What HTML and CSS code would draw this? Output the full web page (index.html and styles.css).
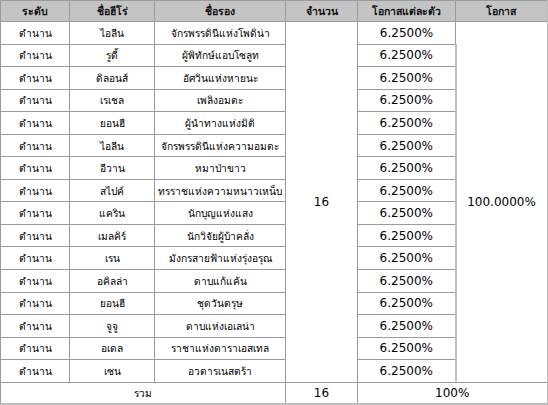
FILE: index.html
```html
<!DOCTYPE html>
<html lang="th">
<head>
<meta charset="utf-8">
<link rel="stylesheet" href="styles.css">
</head>
<body>
<table class="grid">
  <colgroup>
    <col class="c1"><col class="c2"><col class="c3"><col class="c4"><col class="c5"><col class="c6">
  </colgroup>
  <thead>
    <tr class="head">
      <th>ระดับ</th><th>ชื่อฮีโร่</th><th>ชื่อรอง</th><th>จำนวน</th><th>โอกาสแต่ละตัว</th><th>โอกาส</th>
    </tr>
  </thead>
  <tbody>
    <tr><td class="th">ตำนาน</td><td class="th">ไอลีน</td><td class="th">จักรพรรดินีแห่งโพดิน่า</td><td class="num" rowspan="16">16</td><td class="num">6.2500%</td><td class="num" rowspan="16">100.0000%</td></tr>
    <tr><td class="th">ตำนาน</td><td class="th">รูดี้</td><td class="th">ผู้พิทักษ์แอบโซลูท</td><td class="num">6.2500%</td></tr>
    <tr><td class="th">ตำนาน</td><td class="th">ดิลอนส์</td><td class="th">อัศวินแห่งหายนะ</td><td class="num">6.2500%</td></tr>
    <tr><td class="th">ตำนาน</td><td class="th">เรเชล</td><td class="th">เพลิงอมตะ</td><td class="num">6.2500%</td></tr>
    <tr><td class="th">ตำนาน</td><td class="th">ยอนฮี</td><td class="th">ผู้นำทางแห่งมิติ</td><td class="num">6.2500%</td></tr>
    <tr><td class="th">ตำนาน</td><td class="th">ไอลีน</td><td class="th">จักรพรรดินีแห่งความอมตะ</td><td class="num">6.2500%</td></tr>
    <tr><td class="th">ตำนาน</td><td class="th">อีวาน</td><td class="th">หมาป่าขาว</td><td class="num">6.2500%</td></tr>
    <tr><td class="th">ตำนาน</td><td class="th">สไปค์</td><td class="th">ทรราชแห่งความหนาวเหน็บ</td><td class="num">6.2500%</td></tr>
    <tr><td class="th">ตำนาน</td><td class="th">แคริน</td><td class="th">นักบุญแห่งแสง</td><td class="num">6.2500%</td></tr>
    <tr><td class="th">ตำนาน</td><td class="th">เมลคิร์</td><td class="th">นักวิจัยผู้บ้าคลั่ง</td><td class="num">6.2500%</td></tr>
    <tr><td class="th">ตำนาน</td><td class="th">เรน</td><td class="th">มังกรสายฟ้าแห่งรุ่งอรุณ</td><td class="num">6.2500%</td></tr>
    <tr><td class="th">ตำนาน</td><td class="th">อคิลล่า</td><td class="th">ดาบแก้แค้น</td><td class="num">6.2500%</td></tr>
    <tr><td class="th">ตำนาน</td><td class="th">ยอนฮี</td><td class="th">ชุดวันตรุษ</td><td class="num">6.2500%</td></tr>
    <tr><td class="th">ตำนาน</td><td class="th">จูจู</td><td class="th">ดาบแห่งเอเลน่า</td><td class="num">6.2500%</td></tr>
    <tr><td class="th">ตำนาน</td><td class="th">อเดล</td><td class="th">ราชาแห่งดาราเอสเทล</td><td class="num">6.2500%</td></tr>
    <tr><td class="th">ตำนาน</td><td class="th">เซน</td><td class="th">อวตารเนสตร้า</td><td class="num">6.2500%</td></tr>
  </tbody>
  <tfoot>
    <tr class="foot"><td class="th" colspan="3">รวม</td><td class="num">16</td><td class="num" colspan="2">100%</td></tr>
  </tfoot>
</table>
</body>
</html>
```
FILE: styles.css
```css
html, body {
  margin: 0;
  padding: 0;
  background: #ffffff;
}
.grid {
  border-collapse: collapse;
  table-layout: fixed;
  width: 547px;
  color: #000;
  font-family: "DejaVu Sans", "Noto Sans", sans-serif;
}
.c1 { width: 69px; }
.c2 { width: 85px; }
.c3 { width: 131px; }
.c4 { width: 72px; }
.c5 { width: 98px; }
.c6 { width: 92px; }
.grid th, .grid td {
  border: 1px solid #9a9a9a;
  padding: 0;
  text-align: center;
  vertical-align: middle;
  overflow: hidden;
  white-space: nowrap;
}
.head th {
  background: #c4c4c4;
  height: 20px;
  font-size: 10.5px;
  font-weight: bold;
  color: #111;
}
tbody tr { height: 22.56px; }
.foot { height: 22px; }
.th { font-size: 10.2px; }
.num { font-size: 12px; }
.grid tr > :last-child { border-right: 2px solid #bdbdbd; }
.foot td { border-bottom: 2px solid #bdbdbd; }
```
